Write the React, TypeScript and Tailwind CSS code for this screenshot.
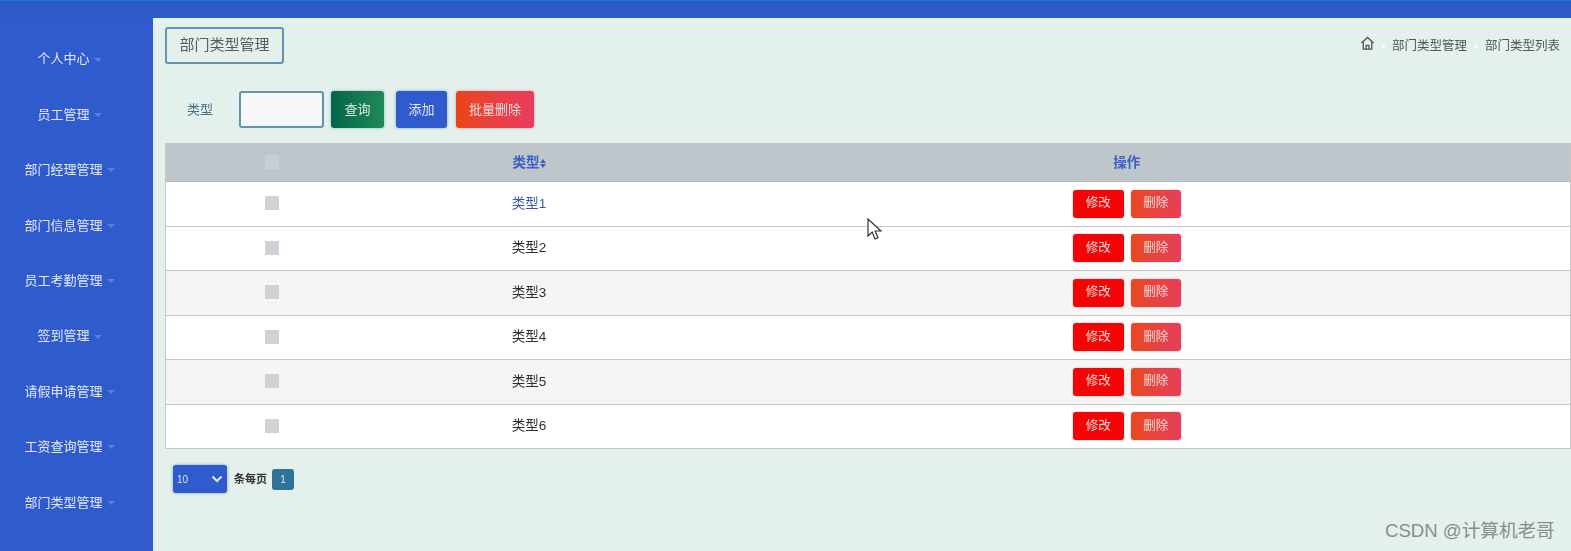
import React from "react";

const menu = ["个人中心", "员工管理", "部门经理管理", "部门信息管理", "员工考勤管理", "签到管理", "请假申请管理", "工资查询管理", "部门类型管理"];
const rows = ["类型1", "类型2", "类型3", "类型4", "类型5", "类型6"];
const font = { fontFamily: '"Liberation Sans", "Noto Sans CJK SC", sans-serif' };

function Check({ light }: { light?: boolean }) {
  return <span className={`mb-[2px] inline-block h-[14px] w-[14px] align-middle ${light ? "bg-[#c8ced3]" : "bg-[#cfd2d6]"}`} />;
}

export default function App() {
  return (
    <div style={font} className="relative flex h-[551px] w-[1571px] flex-col overflow-hidden bg-[#305bcd]">
      <div className="h-[18px] shrink-0 border-t border-[#0b84c2] bg-[#2e59c9]" />
      <div className="flex min-h-0 flex-1 blur-[0.5px]">
        <aside className="flex w-[153px] shrink-0 flex-col pr-[14px] pt-[13.5px]">
          {menu.map((m) => (
            <div key={m} className="flex h-[55.4px] items-center justify-center gap-[4px] text-[13px] text-[#e4e9f5]">
              <span>{m}</span>
              <span className="mt-[1px] h-0 w-0 border-x-[4px] border-t-[4px] border-x-transparent border-t-[#5a7fd8]" />
            </div>
          ))}
        </aside>
        <main className="min-w-0 flex-1 bg-[#e3f0eb] pl-[12px] pt-[9px]">
          <div className="flex items-start justify-between pr-[11px]">
            <div className="flex h-[37px] w-[119px] items-center justify-center rounded-[3px] border-2 border-[#6593ac] text-[15px] text-[#555b5e]">
              部门类型管理
            </div>
            <div className="mt-[8px] flex items-center text-[12.5px] text-[#50565a]">
              <svg width="15" height="17" viewBox="0 0 16 17" fill="none" stroke="#50575a" strokeWidth="1.4" className="mb-[5px]">
                <path d="M1.5 8 8 2l6.5 6" />
                <path d="M3.5 7v7.5h9V7" />
                <path d="M6.5 14.5V10.5h3v4" />
              </svg>
              <span className="mx-[7px] h-[3px] w-[3px] rounded-full bg-white" />
              <span>部门类型管理</span>
              <span className="ml-[8px] mr-[7px] h-[3px] w-[3px] rounded-full bg-white" />
              <span>部门类型列表</span>
            </div>
          </div>

          <div className="mt-[27px] flex h-[37px] items-center text-[13px]">
            <span className="ml-[22px] w-[52px] text-[#44708a]">类型</span>
            <div className="h-[37px] w-[85px] rounded-[3px] border-2 border-[#6593ac] bg-[#f5f8f6]" />
            <button className="ml-[7px] h-[37px] w-[53px] rounded-[3px] bg-gradient-to-r from-[#04654a] to-[#1f8a58] text-[#dce9e3] shadow-[0_0_3px_#7fb5c6]">查询</button>
            <button className="ml-[12px] h-[37px] w-[51px] rounded-[3px] bg-[#305bcd] text-[#e4e9f5] shadow-[0_0_3px_#7fa0c6]">添加</button>
            <button className="ml-[9px] h-[37px] w-[78px] rounded-[3px] bg-gradient-to-r from-[#ea4412] to-[#e83c5e] text-[#f3dcd8] shadow-[0_0_3px_#c8a0c0]">批量删除</button>
          </div>

          <table className="mt-[15px] w-[1406px] table-fixed border-collapse border border-[#c4c6c7] text-[13.5px]">
            <colgroup>
              <col className="w-[212px]" />
              <col className="w-[302px]" />
              <col />
            </colgroup>
            <thead>
              <tr className="h-[38px] border-b border-[#b4babe] bg-[#bfc6cb] font-bold text-[#3b60c4]">
                <th><Check light /></th>
                <th className="pt-[1px] pl-[1px] font-bold">
                  类型<span className="inline-flex flex-col align-middle">
                    <span className="mb-[1px] h-0 w-0 border-x-[3.5px] border-b-[4px] border-x-transparent border-b-[#3b60c4]" />
                    <span className="h-0 w-0 border-x-[3.5px] border-t-[4px] border-x-transparent border-t-[#3b60c4]" />
                  </span>
                </th>
                <th className="pl-[4px] pt-[1px] font-bold">操作</th>
              </tr>
            </thead>
            <tbody>
              {rows.map((r, i) => (
                <tr key={r} className={`h-[44.5px] border-b border-[#c8c8c8] ${i === 2 || i === 4 ? "bg-[#f5f5f5]" : "bg-white"}`}>
                  <td className="text-center"><Check /></td>
                  <td className={`pl-[1px] text-center ${i === 0 ? "text-[#3b5a9e]" : "text-[#2e2e2e]"}`}>{r}</td>
                  <td className="pl-[4px]">
                    <div className="flex items-center justify-center gap-[7px] text-[12.5px] text-[#f3dcd8]">
                      <button className="h-[28px] w-[51px] rounded-[3px] bg-[#f30505] shadow-[0_0_2px_#e8a0b0]">修改</button>
                      <button className="h-[28px] w-[50px] rounded-[3px] bg-gradient-to-r from-[#e8481c] to-[#e63e58] shadow-[0_0_2px_#d0a8c8]">删除</button>
                    </div>
                  </td>
                </tr>
              ))}
            </tbody>
          </table>

          <div className="ml-[8px] mt-[16px] flex items-center text-[11px]">
            <div className="flex h-[28px] w-[54px] items-center justify-between rounded-[3px] bg-[#305bcd] pl-[4px] pr-[4px] text-[10px] text-[#d8e0f4] shadow-[0_0_3px_#6f9be0]">
              <span>10</span>
              <svg width="12" height="8" viewBox="0 0 12 8" fill="none" stroke="#e4e9f5" strokeWidth="2">
                <path d="M1.5 1.5 6 6l4.5-4.5" />
              </svg>
            </div>
            <span className="ml-[7px] font-bold text-[#333]">条每页</span>
            <span className="ml-[5px] flex h-[21px] w-[22px] items-center justify-center rounded-[3px] bg-[#2f7399] text-[10px] text-[#d5e4ec]">1</span>
          </div>
        </main>
      </div>

      <svg className="absolute left-[867px] top-[218px]" width="16" height="24" viewBox="0 0 16 24" fill="#fff" stroke="#333" strokeWidth="1.2">
        <path d="M1 1v17l4.2-4 2.8 7 3-1.3-2.8-6.7H14L1 1Z" />
      </svg>
      <span className="absolute left-[1385px] top-[520px] text-[18.6px] leading-[22px] text-[#8b8d8c]">CSDN @计算机老哥</span>
    </div>
  );
}
